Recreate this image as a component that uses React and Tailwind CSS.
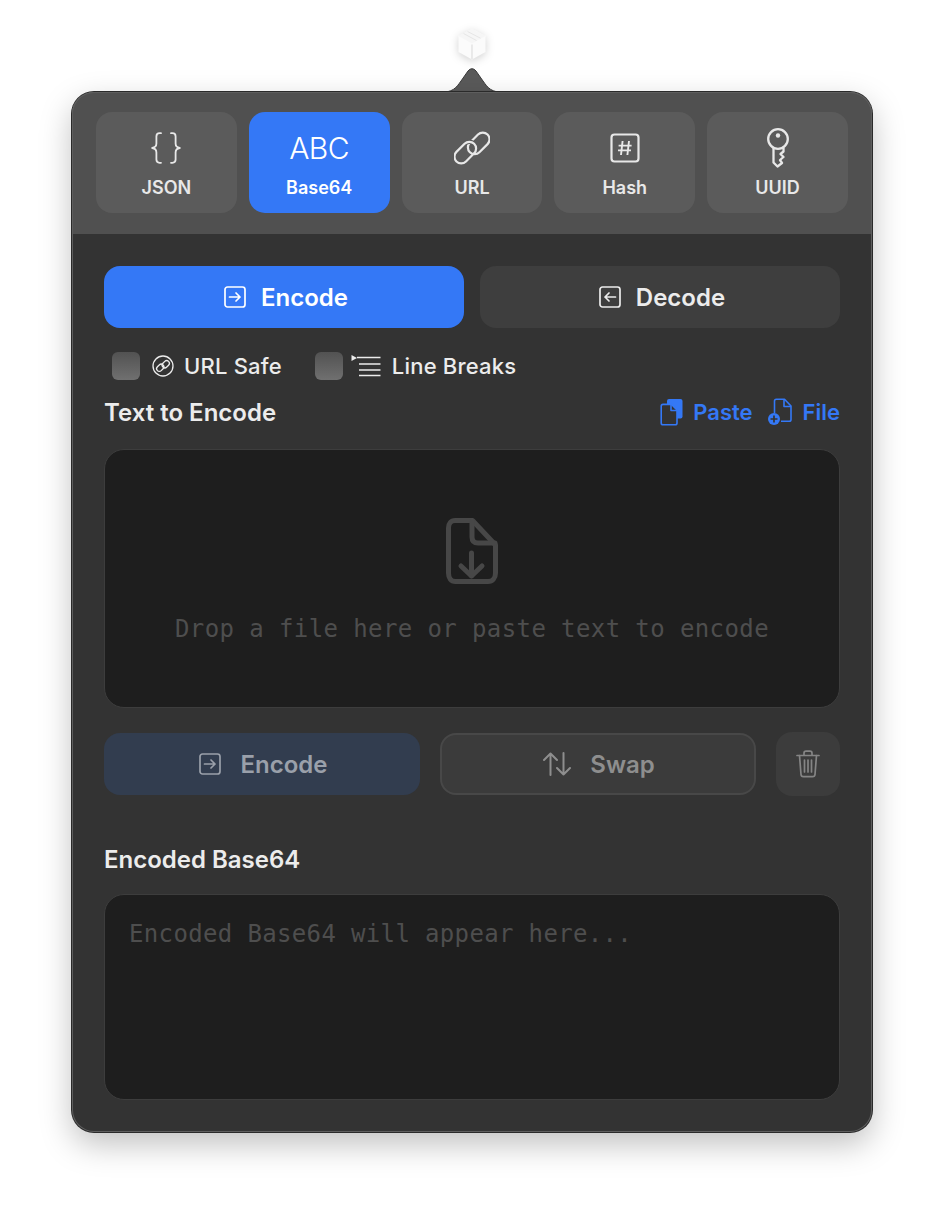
import React from 'react';

const sans = "font-['Inter','Liberation_Sans',sans-serif]";

const Braces = () => (
  <svg width="30" height="32" viewBox="0 0 30 32" fill="none" stroke="currentColor" strokeWidth="1.8" strokeLinecap="round" strokeLinejoin="round">
    <path d="M10 1.2H8.6C6.4 1.2 5.4 2.4 5.4 4.4V11.6C5.4 14 4 15.6 1.2 16C4 16.4 5.4 18 5.4 20.4V27.6C5.4 29.6 6.4 30.8 8.6 30.8H10" />
    <path d="M20 1.2H21.4C23.6 1.2 24.6 2.4 24.6 4.4V11.6C24.6 14 26 15.6 28.8 16C26 16.4 24.6 18 24.6 20.4V27.6C24.6 29.6 23.6 30.8 21.4 30.8H20" />
  </svg>
);

// two interlocked capsules, the halo makes one pass under the other
const LinkIcon = () => (
  <svg width="36" height="36" viewBox="0 0 36 36" fill="none" stroke="currentColor" strokeWidth="2.2">
    <defs>
      <clipPath id="link-over">
        <rect x="8" y="0" width="20" height="18" />
      </clipPath>
    </defs>
    <g transform="rotate(-45 18 18)">
      <rect x="13.5" y="12.75" width="25" height="13.5" rx="6.75" />
      <g clipPath="url(#link-over)">
        <rect x="-2.5" y="9.75" width="25" height="13.5" rx="6.75" stroke="#5b5b5b" strokeWidth="4.4" />
      </g>
      <rect x="-2.5" y="9.75" width="25" height="13.5" rx="6.75" />
    </g>
  </svg>
);

const HashIcon = () => (
  <svg width="30" height="30" viewBox="0 0 30 30" fill="none" stroke="currentColor" strokeWidth="2.2">
    <rect x="1.5" y="1.5" width="27" height="27" rx="3" />
    <path strokeWidth="1.9" d="M12.6 8L11 22M19 8L17.4 22M8.6 12.6H21.6M8 17.4H21" />
  </svg>
);

const KeyIcon = () => (
  <svg width="24" height="40" viewBox="0 0 24 40" fill="none" stroke="currentColor" strokeWidth="2.3" strokeLinejoin="round">
    <circle cx="12" cy="11" r="9.8" />
    <circle cx="12" cy="7.5" r="2.2" fill="currentColor" stroke="none" />
    <path d="M7.5 20V34.5L11.5 38.5L16 35L14 32L17.5 29L14.5 26L17.5 23.5V19.8" />
  </svg>
);

const SquareArrow = ({ dir = 'right' }) => (
  <svg width="22" height="22" viewBox="0 0 22 22" fill="none" stroke="currentColor" strokeWidth="1.7" strokeLinecap="round" strokeLinejoin="round">
    <rect x="1" y="1" width="20" height="20" rx="2.5" />
    {dir === 'right' ? <path d="M5.5 11H16M12 7L16 11L12 15" /> : <path d="M16.5 11H6M10 7L6 11L10 15" />}
  </svg>
);

const SafeIcon = () => (
  <svg width="22" height="22" viewBox="0 0 22 22" fill="none" stroke="currentColor" strokeWidth="1.3">
    <circle cx="11" cy="11" r="10" />
    <g transform="rotate(-45 11 11)">
      <rect x="3.8" y="7.6" width="8" height="5.4" rx="2.7" />
      <rect x="10.2" y="9" width="8" height="5.4" rx="2.7" />
    </g>
  </svg>
);

const BreaksIcon = () => (
  <svg width="30" height="22" viewBox="0 0 30 22" fill="none" stroke="currentColor" strokeWidth="1.6">
    <path d="M0.5 0L6 3L0.5 6Z" fill="currentColor" stroke="none" />
    <path d="M6 2.5H29.5M8 9H29.5M8 15H29.5M8 20.5H29.5" />
  </svg>
);

const PasteIcon = () => (
  <svg width="24" height="28" viewBox="0 0 24 28" fill="none" stroke="currentColor" strokeWidth="1.6" strokeLinejoin="round">
    <rect x="7" y="1" width="15.5" height="19.5" rx="2" fill="currentColor" stroke="none" />
    <path d="M3 6.4H11.5L17 12V25C17 26 16.2 26.8 15.2 26.8H3C2 26.8 1.2 26 1.2 25V8.2C1.2 7.2 2 6.4 3 6.4Z" fill="#333333" />
    <path d="M11 6.4V12.5H17" />
  </svg>
);

const FileAddIcon = () => (
  <svg width="24" height="28" viewBox="0 0 24 28" fill="none" stroke="currentColor" strokeWidth="1.6" strokeLinejoin="round">
    <path d="M6.5 15V3C6.5 2 7.3 1.2 8.3 1.2H16.5L23 8V21.5C23 22.5 22.2 23.3 21.2 23.3H13" />
    <path d="M16 1.2V8.5H23" />
    <circle cx="6" cy="21" r="6" fill="currentColor" stroke="none" />
    <path d="M6 17.5V24.5M2.5 21H9.5" stroke="#333333" strokeWidth="1.7" />
  </svg>
);

const DropIcon = () => (
  <svg width="52" height="66" viewBox="0 0 52 66" fill="none" stroke="#474747" strokeWidth="5" strokeLinecap="round" strokeLinejoin="round">
    <path d="M9 2.5H26.5L49.5 27V55C49.5 60 46.5 63.5 42 63.5H9.5C5 63.5 2.5 60 2.5 55V10C2.5 5.5 5 2.5 9 2.5Z" />
    <path d="M26 3V19C26 23 28 25 32 25H49" />
    <path d="M25.5 35V58M15 48L25.5 58L36 48" />
  </svg>
);

const SwapIcon = () => (
  <svg width="28" height="24" viewBox="0 0 28 24" fill="none" stroke="currentColor" strokeWidth="2" strokeLinecap="round" strokeLinejoin="round">
    <path d="M7.5 23V1.5M1 8L7.5 1.5L14 8" />
    <path d="M20.5 1V22.5M14 16L20.5 22.5L27 16" />
  </svg>
);

const TrashIcon = () => (
  <svg width="24" height="28" viewBox="0 0 24 28" fill="none" stroke="currentColor" strokeWidth="1.7" strokeLinecap="round" strokeLinejoin="round">
    <path d="M1 5.5H23M8 5V3.2C8 2 8.8 1.2 10 1.2H14C15.2 1.2 16 2 16 3.2V5" />
    <path d="M3.5 5.5L5 24.5C5.1 25.8 6 26.7 7.3 26.7H16.7C18 26.7 18.9 25.8 19 24.5L20.5 5.5" />
    <path d="M8.5 10V22M12 10V22M15.5 10V22" />
  </svg>
);

const Cube = () => (
  <svg width="30" height="32" viewBox="0 0 30 32" className="drop-shadow-[0_2px_4px_rgba(0,0,0,0.18)]">
    <path d="M15 1L28.5 8V24L15 31.5L1.5 24V8Z" fill="#fbfbfb" />
    <path d="M15 15.5L28.5 8L15 1L1.5 8Z" fill="#f6f6f6" />
    <path d="M15 16.5V31" stroke="#e2e2e2" strokeWidth="1.4" />
    <path d="M6.5 5.5L19.5 12.5M10.5 3.5L23.5 10.2" stroke="#e6e6e6" strokeWidth="1" />
  </svg>
);

const tools = [
  { name: 'JSON', icon: <Braces /> },
  { name: 'Base64', active: true, icon: <span className="text-[30px] leading-none font-light tracking-[-0.5px]">ABC</span> },
  { name: 'URL', icon: <LinkIcon /> },
  { name: 'Hash', icon: <HashIcon /> },
  { name: 'UUID', icon: <KeyIcon /> },
];

const ToolTile = ({ tool }) => (
  <div className={`flex h-[101px] flex-col items-center rounded-[16px] pt-[16px] ${tool.active ? 'bg-[#3478f6] text-white' : 'bg-[#5b5b5b] text-[#e8e8e8]'}`}>
    <div className="flex h-[40px] items-center justify-center">{tool.icon}</div>
    <span className="mt-[10px] text-[18px] leading-[20px] font-semibold">{tool.name}</span>
  </div>
);

const Option = ({ icon, label }) => (
  <div className="flex items-center">
    <div className="h-[28px] w-[28px] rounded-[6px] bg-gradient-to-b from-[#525252] to-[#707070]" />
    {icon}
    <span className="text-[22px] leading-[28px] font-medium tracking-[0.2px] text-[#ececec]">{label}</span>
  </div>
);

export default function App() {
  return (
    <div className={`flex min-h-[1212px] w-[944px] flex-col items-center bg-white pt-[28px] ${sans}`}>
      <Cube />
      <svg width="66" height="26" viewBox="0 0 66 26" className="mt-[7px] -mb-px">
        <path d="M0 25.5C14 25.5 17 21 22 14L29 4C31.5 1 34.5 1 37 4L44 14C49 21 52 25.5 66 25.5Z" fill="#5a5a5a" stroke="#3a3a3a" strokeWidth="1" />
        <path d="M1 25H65V26H1Z" fill="#505050" />
      </svg>
      <div className="flex h-[1040px] w-[800px] flex-col rounded-[22px] bg-[#333333] shadow-[0_0_0_1px_#2a2a2a,inset_0_0_0_1px_#5e5e5e,0_12px_32px_rgba(0,0,0,0.25)]">
        <div className="grid grid-cols-5 gap-[12px] rounded-t-[22px] bg-[#505050] px-[24px] pt-[20px] pb-[21px] shadow-[inset_0_1px_0_#5e5e5e,inset_1px_0_0_#5e5e5e,inset_-1px_0_0_#5e5e5e]">
          {tools.map((tool) => (
            <ToolTile key={tool.name} tool={tool} />
          ))}
        </div>

        <div className="flex flex-1 flex-col px-[32px] pt-[32px]">
          <div className="grid grid-cols-2 gap-[16px]">
            <button className="flex h-[62px] items-center justify-center gap-[15px] rounded-[16px] bg-[#3478f6] pl-[4px] text-[24px] font-semibold text-white">
              <SquareArrow />
              <span className="pt-[2px]">Encode</span>
            </button>
            <button className="flex h-[62px] items-center justify-center gap-[15px] rounded-[16px] bg-[#3e3e3e] pl-[4px] text-[24px] font-semibold text-[#ececec]">
              <SquareArrow dir="left" />
              <span className="pt-[2px]">Decode</span>
            </button>
          </div>

          <div className="mt-[24px] flex items-center gap-[33px] pl-[8px]">
            <Option label="URL Safe" icon={<span className="mr-[10px] ml-[12px] text-[#ececec]"><SafeIcon /></span>} />
            <Option label="Line Breaks" icon={<span className="mr-[11px] ml-[8px] text-[#ececec]"><BreaksIcon /></span>} />
          </div>

          <div className="mt-[14px] flex h-[36px] items-center justify-between">
            <span className="pt-[2px] text-[24px] font-semibold text-[#ececec]">Text to Encode</span>
            <div className="flex items-center text-[22px] font-semibold text-[#3478f6]">
              <PasteIcon />
              <span className="ml-[9px]">Paste</span>
              <span className="ml-[15px]"><FileAddIcon /></span>
              <span className="ml-[11px]">File</span>
            </div>
          </div>

          <div className="mt-[19px] flex h-[259px] flex-col items-center rounded-[20px] border border-[#3d3d3d] bg-[#1e1e1e] pt-[68px]">
            <DropIcon />
            <span className="mt-[29px] font-['DejaVu_Sans_Mono',monospace] text-[24px] leading-[32px] tracking-[0.4px] text-[#4e4e4e]">
              Drop a file here or paste text to encode
            </span>
          </div>

          <div className="mt-[24px] grid grid-cols-[1fr_1fr_64px] gap-[20px]">
            <button className="my-[1px] flex h-[62px] items-center justify-center gap-[20px] rounded-[16px] bg-[#323d4f] pl-[2px] text-[24px] font-semibold text-[#9aa0aa]">
              <SquareArrow />
              <span className="pt-[2px]">Encode</span>
            </button>
            <button className="my-[1px] flex h-[62px] items-center justify-center gap-[19px] rounded-[16px] border-2 border-[#484848] bg-[#3b3b3b] pl-[2px] text-[24px] font-semibold text-[#8e8e8e]">
              <SwapIcon />
              <span className="pt-[2px]">Swap</span>
            </button>
            <button className="flex h-[64px] items-center justify-center rounded-[16px] bg-[#3c3c3c] text-[#858585]">
              <TrashIcon />
            </button>
          </div>

          <span className="mt-[46px] text-[24px] leading-[36px] font-semibold text-[#ececec]">Encoded Base64</span>

          <div className="mt-[16px] h-[206px] rounded-[20px] border border-[#3d3d3d] bg-[#1e1e1e] px-[24px] pt-[23px]">
            <span className="font-['DejaVu_Sans_Mono',monospace] text-[24px] leading-[32px] tracking-[0.35px] text-[#4e4e4e]">
              Encoded Base64 will appear here...
            </span>
          </div>
        </div>
      </div>
    </div>
  );
}
